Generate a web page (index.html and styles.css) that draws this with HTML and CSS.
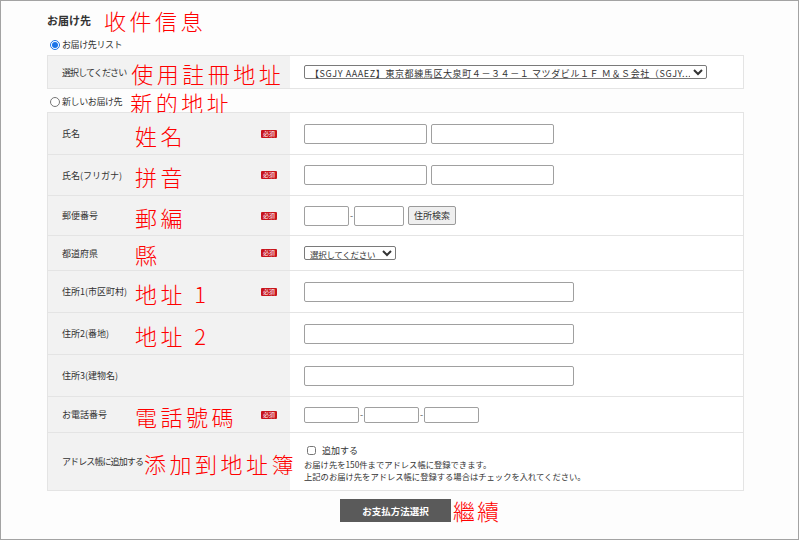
FILE: index.html
```html
<!DOCTYPE html>
<html lang="ja">
<head>
<meta charset="utf-8">
<title>お届け先</title>
<link rel="stylesheet" href="styles.css">
</head>
<body>
<div class="frame">
  <div class="content">
    <div class="heading">
      <h2 class="title">お届け先</h2>
      <span class="note note-title">收件信息</span>
    </div>

    <label class="radio-line radio-list"><input type="radio" name="dest" checked><span>お届け先リスト</span></label>

    <div class="table">
      <div class="row row-list">
        <div class="th"><span class="lbl lbl-free">選択してください</span><span class="note note-list">使用註冊地址</span></div>
        <div class="td">
          <select class="sel-list"><option>【SGJY AAAEZ】東京都練馬区大泉町４－３４－１ マツダビル１Ｆ Ｍ＆Ｓ会社（SGJY...</option></select>
        </div>
      </div>
    </div>

    <label class="radio-line radio-new"><input type="radio" name="dest"><span>新しいお届け先</span><span class="note">新的地址</span></label>

    <div class="table">
      <div class="row row-name">
        <div class="th"><span class="lbl">氏名</span><span class="note">姓名</span><span class="req">必須</span></div>
        <div class="td"><input class="in-name" type="text"><input class="in-name" type="text"></div>
      </div>
      <div class="row row-kana">
        <div class="th"><span class="lbl">氏名(フリガナ)</span><span class="note">拼音</span><span class="req">必須</span></div>
        <div class="td"><input class="in-name" type="text"><input class="in-name" type="text"></div>
      </div>
      <div class="row row-zip">
        <div class="th"><span class="lbl">郵便番号</span><span class="note">郵編</span><span class="req">必須</span></div>
        <div class="td"><input class="in-zip1" type="text"><span class="dash">-</span><input class="in-zip2" type="text"><button class="btn-search" type="button">住所検索</button></div>
      </div>
      <div class="row row-pref">
        <div class="th"><span class="lbl">都道府県</span><span class="note">縣</span><span class="req">必須</span></div>
        <div class="td"><select class="sel-pref"><option>選択してください</option></select></div>
      </div>
      <div class="row row-addr1">
        <div class="th"><span class="lbl">住所1(市区町村)</span><span class="note">地址 1</span><span class="req">必須</span></div>
        <div class="td"><input class="in-addr" type="text"></div>
      </div>
      <div class="row row-addr2">
        <div class="th"><span class="lbl">住所2(番地)</span><span class="note">地址 2</span></div>
        <div class="td"><input class="in-addr" type="text"></div>
      </div>
      <div class="row row-addr3">
        <div class="th"><span class="lbl">住所3(建物名)</span></div>
        <div class="td"><input class="in-addr" type="text"></div>
      </div>
      <div class="row row-tel">
        <div class="th"><span class="lbl">お電話番号</span><span class="note">電話號碼</span><span class="req">必須</span></div>
        <div class="td"><input class="in-tel" type="text"><span class="dash">-</span><input class="in-tel" type="text"><span class="dash">-</span><input class="in-tel" type="text"></div>
      </div>
      <div class="row row-book">
        <div class="th"><span class="lbl lbl-free">アドレス帳に追加する</span><span class="note note-book">添加到地址簿</span></div>
        <div class="td td-book">
          <label class="chk"><input type="checkbox"><span>追加する</span></label>
          <p class="help">お届け先を150件までアドレス帳に登録できます。</p>
          <p class="help">上記のお届け先をアドレス帳に登録する場合はチェックを入れてください。</p>
        </div>
      </div>
    </div>

    <div class="actions">
      <div class="btn-wrap">
        <button class="btn-next" type="button">お支払方法選択</button>
        <span class="note note-next">繼續</span>
      </div>
    </div>
  </div>
</div>
</body>
</html>
```

FILE: styles.css
```css
* { box-sizing: border-box; }

html, body {
  margin: 0;
  padding: 0;
  background: #ffffff;
}

body {
  font-family: "Noto Sans CJK JP", "Noto Sans", sans-serif;
  color: #333333;
  font-size: 9px;
}

.frame {
  width: 799px;
  height: 540px;
  border: 1px solid #a3a3a3;
  background: #fdfdfd;
  overflow: hidden;
}

.content {
  width: 743px;
  padding-left: 46px;
}

.note {
  flex-shrink: 0;
  font-family: "Noto Sans CJK TC", "Noto Sans CJK SC", sans-serif;
  font-weight: 300;
  color: #ff0000;
  font-size: 22px;
  line-height: 1;
  letter-spacing: 3.5px;
  white-space: nowrap;
}

.heading {
  display: flex;
  align-items: center;
  height: 26px;
  margin-top: 6px;
}

.title {
  flex-shrink: 0;
  margin: 0 13px 0 0;
  font-size: 11px;
  font-weight: bold;
  color: #333333;
}

.radio-line {
  display: flex;
  align-items: center;
  font-size: 9px;
  color: #333333;
  white-space: nowrap;
  letter-spacing: -0.4px;
}

.radio-line input {
  width: 10px;
  height: 10px;
  margin: 0 2px 0 3px;
  accent-color: #1a73e8;
}

.radio-list {
  height: 22px;
  padding-top: 1px;
}

.radio-new {
  height: 23px;
  padding-top: 2px;
}

.radio-new .note {
  margin-left: 8px;
  letter-spacing: 3.5px;
}

.table {
  width: 697px;
  border: 1px solid #e4e4e4;
  border-bottom: 0;
}

.row {
  display: grid;
  grid-template-columns: 242px 1fr;
  border-bottom: 1px solid #e4e4e4;
}

.th {
  background: #f2f2f2;
  display: flex;
  align-items: center;
  padding: 0 13px 0 14px;
  position: relative;
  z-index: 1;
}

.lbl {
  flex-shrink: 0;
  min-width: 73px;
  font-size: 9px;
  color: #333333;
  white-space: nowrap;
}

.lbl-free {
  min-width: 0;
  letter-spacing: -0.9px;
}

.th .note {
  padding-top: 2px;
}

.note-list {
  margin-left: 5px;
}

.note-book {
  margin-left: 1px;
}

.req {
  flex-shrink: 0;
  margin-left: auto;
  width: 16px;
  height: 8px;
  background: #c8141c;
  border-radius: 1px;
  color: #ffffff;
  font-size: 6px;
  line-height: 8px;
  text-align: center;
  overflow: hidden;
  white-space: nowrap;
}

.td {
  background: #ffffff;
  display: flex;
  align-items: center;
  padding-left: 14px;
}

.row-list { height: 33px; }
.row-name { height: 42px; }
.row-kana { height: 41px; }
.row-zip { height: 40px; }
.row-pref { height: 35px; }
.row-addr1 { height: 42px; }
.row-addr2 { height: 42px; }
.row-addr3 { height: 42px; }
.row-tel { height: 36px; }
.row-book { height: 58px; }

input[type="text"] {
  height: 20px;
  border: 1px solid #a0a0a0;
  border-radius: 2px;
  background: #ffffff;
  padding: 0;
  margin: 0;
}

.in-name { width: 123px; margin-right: 4px !important; }
.in-zip1 { width: 45px; }
.in-zip2 { width: 50px; }
.in-addr { width: 270px; }
.in-tel { width: 55px; height: 16px !important; }

.dash {
  width: 5px;
  text-align: center;
  font-size: 9px;
  color: #555555;
  line-height: 1;
}

.btn-search {
  margin-left: 4px;
  height: 19px;
  padding: 0 5px;
  font-family: "Noto Sans CJK JP", sans-serif;
  font-size: 9px;
  color: #333333;
  background: #efefef;
  border: 1px solid #9a9a9a;
  border-radius: 2px;
}

select {
  font-family: "Noto Sans CJK JP", sans-serif;
  color: #333333;
  border: 1px solid #7a7a7a;
  border-radius: 2px;
  background: #ffffff;
  margin: 0;
  padding: 0 0 0 1px;
}

.sel-list {
  width: 403px;
  height: 14px;
  font-size: 9px;
  letter-spacing: 0.6px;
}

.sel-pref {
  width: 92px;
  height: 14px;
  font-size: 8.5px;
  letter-spacing: -0.3px;
}

.td-book {
  flex-direction: column;
  align-items: flex-start;
  justify-content: center;
  padding-top: 2px;
}

.chk {
  display: flex;
  align-items: center;
  font-size: 9px;
  margin-left: 3px;
  margin-bottom: 1px;
}

.chk input {
  width: 9px;
  height: 9px;
  margin: 0 6px 0 0;
}

.help {
  margin: 0;
  font-size: 8.3px;
  line-height: 12px;
  white-space: nowrap;
}

.actions {
  display: flex;
  justify-content: center;
  width: 697px;
  padding-top: 8px;
}

.btn-wrap {
  position: relative;
}

.btn-next {
  display: block;
  width: 111px;
  height: 23px;
  border: 0;
  background: #5a5a5a;
  color: #ffffff;
  font-family: "Noto Sans CJK JP", sans-serif;
  font-weight: bold;
  font-size: 9.5px;
  padding: 0;
}

.note-next {
  position: absolute;
  left: 113px;
  top: 0;
  letter-spacing: 2px;
}
```
